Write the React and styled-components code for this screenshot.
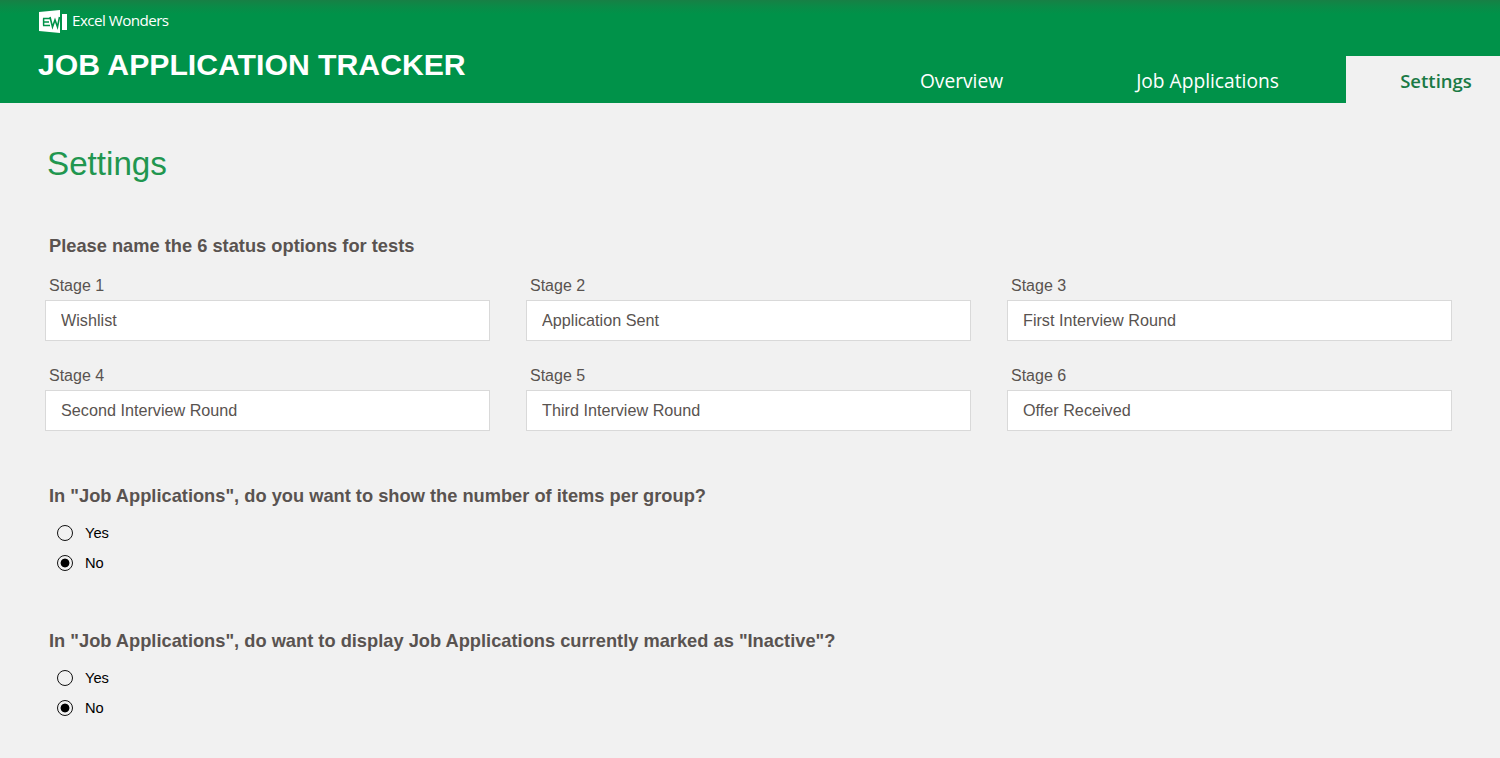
import { createGlobalStyle, styled } from "styled-components";

const GlobalStyle = createGlobalStyle`
  html, body {
    margin: 0;
    padding: 0;
    background: #f1f1f1;
    font-family: "Liberation Sans", Arial, sans-serif;
  }
`

const Page = styled.div`
  width: 1500px;
  height: 758px;
  overflow: hidden;
  background: #f1f1f1;
`

const Header = styled.header`
  height: 103px;
  display: flex;
  justify-content: space-between;
  background: linear-gradient(#178045 0, #0b8a47 6px, #009249 14px, #009249 100%);
`

const Brand = styled.div`
  padding: 10px 0 0 38px;
  display: flex;
  flex-direction: column;
`

const LogoRow = styled.div`
  display: flex;
  align-items: center;
  gap: 4px;
  height: 23px;
  color: #fff;
`

const BrandName = styled.span`
  margin-bottom: 4px;
  font-family: "Open Sans", sans-serif;
  font-size: 15.2px;
  letter-spacing: -0.55px;
`

const Title = styled.h1`
  margin: 12px 0 0;
  color: #fff;
  font-size: 30.2px;
  line-height: 40px;
  font-weight: 700;
  white-space: nowrap;
`

const Tabs = styled.nav`
  display: flex;
  align-items: flex-end;
`

const Tab = styled.div`
  height: 47px;
  width: ${props => props.width}px;
  display: flex;
  align-items: center;
  justify-content: center;
  font-family: "Open Sans", sans-serif;
  font-size: ${props => props.active ? 18.5 : 19.2}px;
  padding: 2px 0 0 ${props => props.active ? 26 : 0}px;
  box-sizing: border-box;
  color: ${props => props.active ? "#1a7a45" : "#fff"};
  background: ${props => props.active ? "#f1f1f1" : "transparent"};
  font-weight: ${props => props.active ? 600 : 400};
`

const Content = styled.main`
  padding: 42px 48px 0 45px;
`

const Heading = styled.h2`
  margin: 0 0 0 2px;
  color: #21964f;
  font-size: 33.2px;
  line-height: 38px;
  font-weight: 400;
`

const SectionTitle = styled.div`
  margin: ${props => props.top}px 0 0 4px;
  color: #595350;
  font-size: 18.27px;
  line-height: 22px;
  font-weight: 700;
`

const StageGrid = styled.div`
  margin-top: 20px;
  display: grid;
  grid-template-columns: repeat(3, 445px);
  column-gap: 36px;
  row-gap: 26px;
`

const Field = styled.div`
  display: flex;
  flex-direction: column;
`

const FieldLabel = styled.label`
  margin-left: 4px;
  color: #595350;
  font-size: 16px;
  line-height: 18px;
  height: 18px;
  margin-bottom: 5px;
`

const FieldInput = styled.input`
  box-sizing: border-box;
  width: 445px;
  height: 41px;
  padding: 0 15px;
  border: 1px solid #d9d9d9;
  background: #fff;
  color: #595350;
  font-family: "Liberation Sans", Arial, sans-serif;
  font-size: 16.2px;
  outline: none;
`

const RadioList = styled.div`
  margin: 11px 0 0 12px;
  display: flex;
  flex-direction: column;
`

const RadioRow = styled.div`
  height: 30px;
  display: flex;
  align-items: center;
  gap: 12px;
  color: #000;
  font-size: 14.7px;
`

const RadioMark = styled.span`
  box-sizing: border-box;
  width: 16px;
  height: 16px;
  border: 1.5px solid #111;
  border-radius: 50%;
  background: ${props => props.checked ? "radial-gradient(circle, #000 0, #000 4px, transparent 4.8px)" : "transparent"};
`

const stages = [
  "Wishlist",
  "Application Sent",
  "First Interview Round",
  "Second Interview Round",
  "Third Interview Round",
  "Offer Received",
]

function Logo() {
  return (
    <svg width="30" height="23" viewBox="0 0 30 23">
      <path d="M1 2 L22 0 V23 L1 21 Z" fill="#fff" />
      <path d="M24 4 H29 V20 H24 Z" fill="#fff" />
      <path d="M5 8.5 H12 M5 12 H11 M5 15.5 H12 M5.6 8.5 V15.5" stroke="#009249" strokeWidth="1.5" fill="none" />
      <path d="M12 7 L14.5 17 L17 10 L19.5 17 L21.5 7" stroke="#009249" strokeWidth="1.6" fill="none" />
    </svg>
  )
}

function RadioGroup() {
  return (
    <RadioList>
      <RadioRow><RadioMark />Yes</RadioRow>
      <RadioRow><RadioMark checked />No</RadioRow>
    </RadioList>
  )
}

export default function App() {
  return (
    <Page>
      <GlobalStyle />
      <Header>
        <Brand>
          <LogoRow>
            <Logo />
            <BrandName>Excel Wonders</BrandName>
          </LogoRow>
          <Title>JOB APPLICATION TRACKER</Title>
        </Brand>
        <Tabs>
          <Tab width={215}>Overview</Tab>
          <Tab width={277}>Job Applications</Tab>
          <Tab width={154} active>Settings</Tab>
        </Tabs>
      </Header>
      <Content>
        <Heading>Settings</Heading>
        <SectionTitle top={52}>Please name the 6 status options for tests</SectionTitle>
        <StageGrid>
          {stages.map((stage, i) => (
            <Field key={stage}>
              <FieldLabel>Stage {i + 1}</FieldLabel>
              <FieldInput defaultValue={stage} />
            </Field>
          ))}
        </StageGrid>
        <SectionTitle top={54}>In "Job Applications", do you want to show the number of items per group?</SectionTitle>
        <RadioGroup />
        <SectionTitle top={52}>In "Job Applications", do want to display Job Applications currently marked as "Inactive"?</SectionTitle>
        <RadioGroup />
      </Content>
    </Page>
  )
}
